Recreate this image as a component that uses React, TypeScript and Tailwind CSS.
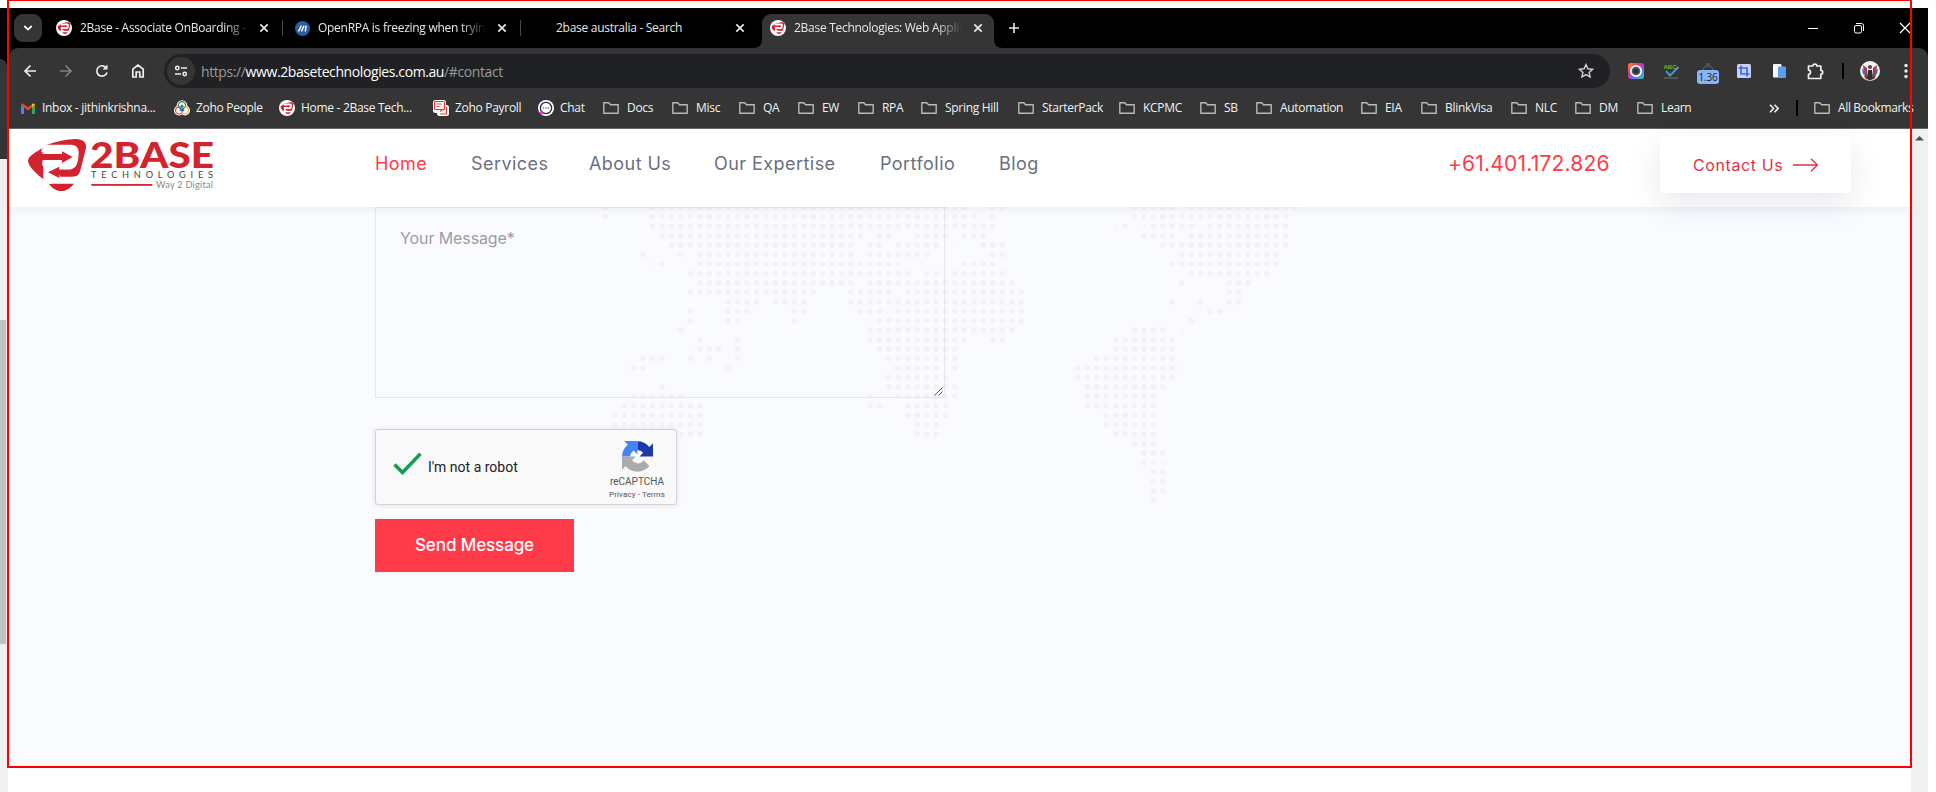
import React from "react";

const UI = "font-['Open_Sans','Noto_Sans',sans-serif]";

/* ---------- world map dots: [row, [from, to], ...] in grid cells ---------- */
const PITCH = 9.45;
const DOTS: [number, ...number[][]][] = [
  [0, [0, 0], [5, 38], [41, 42], [56, 60], [62, 73]],
  [1, [0, 0], [5, 39], [41, 41], [56, 72]],
  [2, [5, 41], [55, 55], [58, 62], [64, 72]],
  [3, [6, 27], [29, 30], [33, 36], [38, 40], [57, 60], [62, 72]],
  [4, [7, 26], [28, 29], [31, 35], [40, 42], [59, 72]],
  [5, [4, 4], [8, 8], [10, 26], [28, 34], [41, 42], [61, 71]],
  [6, [6, 6], [10, 30], [38, 41], [60, 71]],
  [7, [9, 32], [34, 35], [37, 42], [62, 70]],
  [8, [10, 26], [28, 43], [61, 61], [66, 68]],
  [9, [9, 22], [26, 30], [32, 44], [66, 67]],
  [10, [13, 16], [18, 21], [26, 44], [60, 60], [63, 63], [66, 67]],
  [11, [9, 9], [13, 15], [20, 21], [27, 29], [31, 44], [64, 65]],
  [12, [9, 9], [13, 14], [20, 20], [29, 44], [62, 62]],
  [13, [8, 8], [28, 43], [56, 59]],
  [14, [10, 10], [14, 14], [28, 38], [41, 42], [54, 60]],
  [15, [10, 12], [14, 14], [29, 37], [54, 60]],
  [16, [4, 6], [9, 9], [11, 11], [14, 14], [30, 37], [52, 60]],
  [17, [3, 4], [13, 13], [31, 35], [37, 37], [50, 60]],
  [18, [30, 36], [50, 60]],
  [19, [6, 6], [30, 37], [51, 59]],
  [20, [3, 8], [28, 28], [31, 37], [51, 58]],
  [21, [2, 10], [28, 29], [32, 36], [51, 58]],
  [22, [1, 10], [32, 36], [53, 58]],
  [23, [1, 10], [33, 35], [53, 58]],
  [24, [8, 10], [33, 35], [54, 58]],
  [25, [56, 58]],
  [26, [57, 59]],
  [27, [57, 58]],
  [28, [58, 59]],
  [29, [58, 59]],
  [30, [58, 59]],
  [31, [58, 58]],
];
const SMALL = [[37, 4], [5, 6], [31, 6], [9, 15], [54, 2], [57, 2], [63, 11], [61, 13], [61, 17], [59, 27]];

function WorldMap() {
  return (
    <svg className="absolute left-[593px] top-[0px]" width="712" height="310" fill="#f3f3f7">
      {DOTS.flatMap(([r, ...runs]) =>
        runs.flatMap(([a, b]) =>
          Array.from({ length: b - a + 1 }, (_, i) => (
            <circle key={`${r}-${a + i}`} cx={3.3 + (a + i) * PITCH} cy={0.3 + r * PITCH} r="2.8" />
          ))
        )
      )}
      {SMALL.map(([c, r]) => (
        <circle key={`s${c}-${r}`} cx={3.3 + c * PITCH} cy={0.3 + r * PITCH} r="1.3" />
      ))}
    </svg>
  );
}

/* ---------- brand ---------- */
function Emblem() {
  return (
    <g>
      <path fill="#d2232f" d="M24 87C26 66 60 56 82 38C105 29 150 20 168 21C190 22 200 32 198 48L182 112C178 128 172 134 158 134L162 155C150 170 138 177 124 177C110 177 98 170 86 155L68 140C48 124 26 104 24 87Z" />
      <path fill="#fff" d="M64 62C64 44 76 38 90 38H152C168 38 177 48 176 64C175 96 168 110 150 113H96L96 155H68V112C68 98 62 92 64 84Z" />
      <path fill="#fff" d="M66 100H120V155H60V134ZM60 134H190V155H66Z" />
      <path fill="#d2232f" d="M62 66H126V58L158 75L126 93V84H62ZM84 121L118 104V113H176L172 130H118V138Z" />
      <path fill="#d2232f" d="M60 62L68 60V86C64 94 68 100 70 106V141C52 128 40 112 40 92Z" />
    </g>
  );
}

function Favicon() {
  return (
    <svg className="size-4 shrink-0" viewBox="0 0 16 16">
      <circle cx="8" cy="8" r="8" fill="#fff" />
      <svg x="1.2" y="2" width="13.6" height="12.2" viewBox="22 18 178 162">
        <Emblem />
      </svg>
    </svg>
  );
}

function Logo() {
  return (
    <svg className="mt-[3px] shrink-0 self-start" width="190" height="62" viewBox="0 0 190 62">
      <g transform="translate(-8 0) scale(.3333)">
        <Emblem />
      </g>
      <g fontFamily="Lato, 'Open Sans', sans-serif">
        <text x="62" y="35.7" fontSize="36.5" fontWeight="900" fill="#d2232f" textLength="124" lengthAdjust="spacingAndGlyphs">2BASE</text>
        <text x="63" y="45.600" fontSize="9.200" fill="#444" textLength="122" lengthAdjust="spacing">TECHNOLOGIES</text>
        <text x="128" y="55.700" fontSize="9.200" fill="#888" textLength="57" lengthAdjust="spacing">Way 2 Digital</text>
      </g>
      <rect x="63.300" y="52" width="61" height="1.800" fill="#d2232f" />
    </svg>
  );
}

/* ---------- small browser glyphs ---------- */
function Close() {
  return (
    <svg className="size-3 shrink-0" viewBox="0 0 12 12" stroke="#e8e8e8" strokeWidth="1.7">
      <path d="M2.3 2.3l7.4 7.4M9.7 2.3L2.3 9.7" />
    </svg>
  );
}

function Folder() {
  return (
    <svg className="h-3 w-4 shrink-0" viewBox="0 0 16 12" fill="none" stroke="#b9b9b9" strokeWidth="1.4" strokeLinejoin="round">
      <path d="M.8.8h5l1.7 2h7.7v8.4H.8z" />
    </svg>
  );
}

function Title({ children, className }: { children: string; className: string }) {
  return (
    <div className={`h-5 shrink-0 overflow-hidden whitespace-nowrap text-[12px] leading-5 tracking-[-0.28px] text-[#e8e8e8] ${className}`}>
      {children}
    </div>
  );
}

const FADE = "[mask-image:linear-gradient(to_right,#000_85%,transparent)]";

function TabStrip() {
  return (
    <div className="flex h-10 items-center bg-black pl-[5px]">
      <div className="mr-[14px] flex size-7 shrink-0 items-center justify-center rounded-[9px] bg-[#353535]">
        <svg width="10" height="6" viewBox="0 0 10 6" fill="none" stroke="#fff" strokeWidth="1.8">
          <path d="M1.3 1L5 4.6 8.700 1" />
        </svg>
      </div>
      <Favicon />
      <Title className={`ml-2 w-[170px] ${FADE}`}>2Base - Associate OnBoarding -</Title>
      <div className="ml-2"><Close /></div>
      <div className="ml-[12px] h-4 w-px bg-[#4a4a4a]" />
      <svg className="ml-[12px] size-[15px] shrink-0" viewBox="0 0 15 15">
        <circle cx="7.500" cy="7.500" r="7.500" fill="#2a5ea5" />
        <path d="M3.500 10.500L6.300 4.700M6.500 10.500L9 4.700M10.300 10.500l.7-5.800" stroke="#fff" strokeWidth="1.500" fill="none" />
      </svg>
      <Title className={`ml-2 w-[168px] ${FADE}`}>OpenRPA is freezing when trying</Title>
      <div className="ml-[10px]"><Close /></div>
      <div className="ml-[12px] h-4 w-px bg-[#4a4a4a]" />
      <Title className="ml-[35px] w-[178px]">2base australia - Search</Title>
      <Close />
      <svg className="ml-[7px] size-[9px] shrink-0 self-end" viewBox="0 0 9 9" fill="#353535">
        <path d="M9 0v9H0C6 9 9 6 9 0z" />
      </svg>
      <div className="flex h-[34px] w-[232px] shrink-0 items-center self-end rounded-t-[9px] bg-[#353535] pb-[6px] pl-[8px]">
        <Favicon />
        <Title className={`ml-2 w-[168px] ${FADE}`}>2Base Technologies: Web Application</Title>
        <div className="ml-[10px]"><Close /></div>
      </div>
      <svg className="size-[9px] shrink-0 self-end" viewBox="0 0 9 9" fill="#353535">
        <path d="M0 0v9h9C3 9 0 6 0 0z" />
      </svg>
      <svg className="ml-[6px] size-[10px] shrink-0" viewBox="0 0 10 10" stroke="#e8e8e8" strokeWidth="1.600">
        <path d="M5 0v10M0 5h10" />
      </svg>
      <svg className="mr-[16px] ml-auto h-[12px] w-[105px] shrink-0" viewBox="0 0 105 12" fill="none" stroke="#fff" strokeWidth="1">
        <path d="M1 6.500h10" />
        <rect x="47.500" y="3.500" width="7" height="7.500" rx="1.500" />
        <path d="M49 1.500h5.500q2 0 2 2v5.500" />
        <path d="M93 1l10 10M103 1l-10 10" strokeWidth="1.300" />
      </svg>
    </div>
  );
}

function Toolbar() {
  return (
    <div className="bg-black">
      <div className="flex h-10 items-center rounded-t-[9px] bg-[#353535] pt-[6px]">
        <svg className="h-[16px] w-[155px] shrink-0" viewBox="0 0 155 16" fill="none" stroke="#eee" strokeWidth="1.700">
          <path d="M27 8H16.500M21.500 2.500L16 8l5.500 5.500" />
          <path d="M51 8h10.500M56.500 2.500L62 8l-5.500 5.500" stroke="#808080" />
          <path d="M97.300 5A5.200 5.200 0 1 0 98 9.500" />
          <path d="M98.500 1.500v5h-5z" fill="#eee" stroke="none" />
          <path d="M123.800 14V6.200L129 2l5.200 4.200V14h-3.400V9h-3.600v5z" />
        </svg>
        <div className="flex h-[34px] w-[1446px] shrink-0 items-center rounded-full bg-[#202124] pr-[16px] pl-[3px]">
          <div className="flex size-7 items-center justify-center rounded-full bg-[#353535]">
            <svg width="14" height="12" viewBox="0 0 14 12" fill="none" stroke="#eee" strokeWidth="1.500">
              <circle cx="3.300" cy="3" r="1.700" />
              <path d="M7 3h6M1 9h6" />
              <circle cx="10.700" cy="9" r="1.700" />
            </svg>
          </div>
          <div className="ml-[6px] text-[14px] tracking-[-0.4px] whitespace-nowrap text-[#9a9a9a]">
            https://<span className="text-white">www.2basetechnologies.com.au</span>/#contact
          </div>
          <svg className="ml-auto" width="16" height="16" viewBox="0 0 16 16" fill="none" stroke="#d0d0d0" strokeWidth="1.400">
            <path d="M8 1.600l1.900 4.200 4.600.5-3.400 3.100 1 4.500L8 11.600l-4.100 2.300 1-4.500L1.500 6.300l4.600-.5z" />
          </svg>
        </div>
        <svg className="ml-[18px] size-4 shrink-0" viewBox="0 0 16 16">
          <defs>
            <linearGradient id="ring" x1="0" y1="0" x2="1" y2="1">
              <stop offset="0" stopColor="#ff9a1f" />
              <stop offset=".35" stopColor="#f22c6c" />
              <stop offset=".6" stopColor="#7a5cff" />
              <stop offset="1" stopColor="#1fe0a0" />
            </linearGradient>
          </defs>
          <rect width="16" height="16" rx="3" fill="url(#ring)" />
          <circle cx="8" cy="8" r="5.200" fill="#4a5560" stroke="#fff" strokeWidth="1.800" />
          <circle cx="8" cy="8" r="2.500" fill="#27323c" />
        </svg>
        <svg className="ml-[19px] h-4 w-[17px] shrink-0" viewBox="0 0 17 16">
          <path d="M3 8l4 4.500L15.500 4" fill="none" stroke="#3d9ad1" strokeWidth="2" />
          <text x="0.500" y="6" fontSize="6" fontWeight="700" fontFamily="Liberation Sans, sans-serif" fill="#7ab829" textLength="13">ABC</text>
          <path d="M1 15h14" stroke="#777" />
        </svg>
        <div className="ml-[17px] flex h-[28px] w-[22px] shrink-0 flex-col items-center pt-[6px]">
          <svg className="h-[7px] w-[14px] shrink-0" viewBox="0 0 14 7" fill="none" stroke="#5c5c5c" strokeWidth="1.300">
            <path d="M5 1h4M2 7a5 4 0 0 1 10 0" />
          </svg>
          <div className="h-[14px] w-[22px] shrink-0 rounded-[3px] bg-[#8ab4f8] text-center text-[10px] leading-[15px] tracking-tight text-[#202124]">1.36</div>
        </div>
        <svg className="ml-[18px] size-[14px] shrink-0" viewBox="0 0 14 14">
          <rect width="14" height="14" rx="1.500" fill="#c6d2fb" />
          <path d="M4 1.500V10h8.500M1.500 4H10v8.500" fill="none" stroke="#4263eb" strokeWidth="1.600" />
        </svg>
        <svg className="ml-[22px] h-[14px] w-[13px] shrink-0" viewBox="0 0 13 14">
          <rect width="8.500" height="13.500" rx="1" fill="#f4f7fc" />
          <rect x="5" y="2.500" width="8" height="11.500" rx="1" fill="#5b9ff5" />
        </svg>
        <svg className="ml-[21px] h-[17px] w-[18px] shrink-0" viewBox="0 0 18 17" fill="none" stroke="#eee" strokeWidth="1.700" strokeLinejoin="round">
          <path d="M1.500 3h4.300a2 1.900 0 0 1 4 0h4v4.300a1.900 2 0 0 1 0 4V15.500H1.500v-4.200a2 2.100 0 0 0 0-4.200z" />
        </svg>
        <div className="ml-[17px] h-4 w-[2px] shrink-0 bg-black" />
        <svg className="ml-[16px] size-5 shrink-0" viewBox="0 0 20 20">
          <circle cx="10" cy="10" r="10" fill="#f3f3f3" />
          <path d="M3 4l4 3v8l-3-3zM17 4l-4 3v8l3-3z" fill="#c33149" />
          <path d="M2 8l3 1 1 6-3-2zM18 8l-3 1-.5 6 2.500-2z" fill="#3e6fb5" />
          <path d="M4 15l3-3 1 6-2 .5zM16 15l-3-3-1 6 2 .5z" fill="#8a4038" />
          <circle cx="10" cy="6" r="2" fill="#5b4038" />
          <path d="M8 9h4l1 9-3 1.500L7 18z" fill="#2b2f36" />
        </svg>
        <svg className="ml-[24px] h-4 w-1 shrink-0" viewBox="0 0 4 16" fill="#eee">
          <circle cx="2" cy="2.500" r="1.700" /><circle cx="2" cy="8" r="1.700" /><circle cx="2" cy="13.500" r="1.700" />
        </svg>
      </div>
    </div>
  );
}

/* ---------- bookmarks ---------- */
const Gmail = () => (
  <svg className="h-[11px] w-[14px] shrink-0" viewBox="0 0 14 11">
    <path fill="#4285f4" d="M0 2v8.200q0 .8.800.8H3V4z" />
    <path fill="#34a853" d="M14 2v8.200q0 .8-.8.800H11V4z" />
    <path fill="#ea4335" d="M0 2Q.2 0 2 .5L7 4.300 12 .5Q13.800 0 14 2L7 7.600z" />
    <path fill="#fbbc04" d="M11 4.500V1.200L12 .5q1.800-.3 2 1.500z" />
  </svg>
);
const People = () => (
  <svg className="size-4 shrink-0" viewBox="0 0 16 16" fill="none" strokeWidth="1.200">
    <circle cx="8" cy="5.500" r="5.300" fill="#fff" /><circle cx="5" cy="10.500" r="5" fill="#fff" /><circle cx="11" cy="10.500" r="5" fill="#fff" />
    <circle cx="8" cy="5.300" r="3.600" stroke="#1f8a4c" /><circle cx="5.200" cy="10.400" r="3.600" stroke="#e0403a" /><circle cx="10.800" cy="10.400" r="3.600" stroke="#e9b320" />
    <circle cx="8" cy="6" r="1.500" fill="#2d74c4" /><path d="M5.500 11a2.500 2.500 0 0 1 5 0z" fill="#2d74c4" />
  </svg>
);
const Payroll = () => (
  <svg className="size-4 shrink-0" viewBox="0 0 16 16">
    <rect width="13" height="13" rx="2.500" fill="#fff" />
    <rect x="4" y="5" width="12" height="11" rx="2.500" fill="#fff" />
    <rect x="1.500" y="1.500" width="10" height="8" rx="1" fill="none" stroke="#e0403a" strokeWidth="1.200" />
    <path d="M3.500 4h5M3.500 6.500h3M7 14h6.500V7M7 11.500l3-2" stroke="#e0403a" strokeWidth="1.200" fill="none" />
  </svg>
);
const Chat = () => (
  <svg className="size-4 shrink-0" viewBox="0 0 16 16">
    <circle cx="8" cy="8" r="8" fill="#fff" />
    <circle cx="8" cy="8" r="5.600" fill="none" stroke="#2a2350" strokeWidth="1.300" />
    <path d="M5 8h1.200M7.400 8h1.200M9.800 8H11" stroke="#2a2350" strokeWidth="1.200" />
    <circle cx="3.500" cy="12.500" r="1.800" fill="#f032c8" />
  </svg>
);

const BOOKMARKS: { label: string; icon: React.ReactNode; gap: string; width: string }[] = [
  { label: "Inbox - jithinkrishna...", icon: <Gmail />, gap: "gap-[7px]", width: "w-[153px]" },
  { label: "Zoho People", icon: <People />, gap: "gap-[6px]", width: "w-[105px]" },
  { label: "Home - 2Base Tech...", icon: <Favicon />, gap: "gap-[6px]", width: "w-[154px]" },
  { label: "Zoho Payroll", icon: <Payroll />, gap: "gap-[6px]", width: "w-[105px]" },
  { label: "Chat", icon: <Chat />, gap: "gap-[6px]", width: "w-[65px]" },
  { label: "Docs", icon: <Folder />, gap: "gap-2", width: "w-[69px]" },
  { label: "Misc", icon: <Folder />, gap: "gap-2", width: "w-[67px]" },
  { label: "QA", icon: <Folder />, gap: "gap-2", width: "w-[59px]" },
  { label: "EW", icon: <Folder />, gap: "gap-2", width: "w-[60px]" },
  { label: "RPA", icon: <Folder />, gap: "gap-2", width: "w-[63px]" },
  { label: "Spring Hill", icon: <Folder />, gap: "gap-2", width: "w-[97px]" },
  { label: "StarterPack", icon: <Folder />, gap: "gap-2", width: "w-[101px]" },
  { label: "KCPMC", icon: <Folder />, gap: "gap-2", width: "w-[81px]" },
  { label: "SB", icon: <Folder />, gap: "gap-2", width: "w-[56px]" },
  { label: "Automation", icon: <Folder />, gap: "gap-2", width: "w-[105px]" },
  { label: "EIA", icon: <Folder />, gap: "gap-2", width: "w-[60px]" },
  { label: "BlinkVisa", icon: <Folder />, gap: "gap-2", width: "w-[90px]" },
  { label: "NLC", icon: <Folder />, gap: "gap-2", width: "w-[64px]" },
  { label: "DM", icon: <Folder />, gap: "gap-2", width: "w-[62px]" },
  { label: "Learn", icon: <Folder />, gap: "gap-2", width: "w-[132px]" },
];

function Bookmarks() {
  return (
    <div className="flex h-[41px] items-center border-b border-[#666] bg-[#353535] pl-[12px] text-[12px] tracking-[-0.3px] whitespace-nowrap text-[#f2f2f2]">
      {BOOKMARKS.map((b) => (
        <div key={b.label} className={`flex shrink-0 items-center ${b.gap} ${b.width}`}>
          {b.icon}
          <span>{b.label}</span>
        </div>
      ))}
      <svg className="shrink-0" width="10" height="9" viewBox="0 0 10 9" fill="none" stroke="#eee" strokeWidth="1.600">
        <path d="M1 .7l3.600 3.800L1 8.300M5.500.7l3.600 3.800-3.600 3.800" />
      </svg>
      <div className="ml-[17px] h-4 w-[2px] shrink-0 bg-black" />
      <div className="ml-[16px] flex items-center gap-2 tracking-[-0.35px]">
        <Folder />
        <span>All Bookmarks</span>
      </div>
    </div>
  );
}

/* ---------- site ---------- */
const NAV = [
  { label: "Home", cls: "w-[96px] text-[#ff3b49]" },
  { label: "Services", cls: "w-[118px]" },
  { label: "About Us", cls: "w-[125px]" },
  { label: "Our Expertise", cls: "w-[166px]" },
  { label: "Portfolio", cls: "w-[119px]" },
  { label: "Blog", cls: "w-[449px]" },
];

function SiteHeader() {
  return (
    <header className="relative z-10 flex h-[78px] items-center bg-white pl-[19px] font-[Inter,sans-serif] shadow-[0_2px_8px_rgba(80,90,120,0.09)]">
      <Logo />
      <nav className="mb-[10px] ml-[157px] flex text-[18px] tracking-[0.45px] whitespace-nowrap text-[#6b6f82]">
        {NAV.map((n) => (
          <a key={n.label} className={`shrink-0 ${n.cls}`}>{n.label}</a>
        ))}
      </nav>
      <div className="mb-[8px] w-[212px] shrink-0 text-[21px] tracking-[0.2px] whitespace-nowrap text-[#ff3b49]">+61.401.172.826</div>
      <button className="mb-[7px] flex h-[57px] w-[191px] shrink-0 items-center rounded bg-white pl-[33px] text-[16px] tracking-[0.6px] text-[#dc3545] shadow-[0_10px_30px_rgba(60,80,110,0.13)]">
        <span className="w-[100px] text-left whitespace-nowrap">Contact Us</span>
        <svg width="26" height="14" viewBox="0 0 26 14" fill="none" stroke="#dc3545" strokeWidth="1.300">
          <path d="M0 7h24.500M18 .8L24.500 7 18 13.200" />
        </svg>
      </button>
    </header>
  );
}

function Recaptcha() {
  return (
    <div className="mt-[31px] flex h-[76px] w-[302px] items-center rounded-[3px] border border-[#d3d3d3] bg-[#f9f9f9] font-[Roboto,sans-serif] shadow-[0_0_4px_1px_rgba(0,0,0,0.08)]">
      <svg className="mb-[7px] ml-[17px] shrink-0" width="29" height="23" viewBox="0 0 29 23" fill="none" stroke="#0f9d58" strokeWidth="3.400">
        <path d="M1.500 12.500l8 8L27.500 1.700" />
      </svg>
      <span className="ml-[6px] text-[14px] whitespace-nowrap text-[#222]">I&#39;m not a robot</span>
      <div className="ml-auto flex w-[78px] flex-col items-center pt-[6px] text-[#555]">
        <svg width="31" height="31" viewBox="0 0 64 64">
          <path fill="#1c3aa9" d="M64 31.955V4.600l-7.560 7.560A31.960 31.960 0 0 0 31.700.300v18.300a15.200 15.200 0 0 1 12 5.900l-7.500 7.500z" />
          <path fill="#4285f4" d="M31.862.094H4.500l7.600 7.600A31.960 31.960 0 0 0 .1 32h17.100c0-5.400 2.500-9.300 6.800-12.200l7.800 7.800z" />
          <path fill="#ababab" d="M.001 32.045V59.400l7.500-7.500A31.960 31.960 0 0 0 56.700 51.500L44.800 40.500a15.300 15.300 0 0 1-24.300-.6l7.800-7.800z" />
        </svg>
        <span className="mt-[3px] text-[10px] leading-[14px]">reCAPTCHA</span>
        <span className="text-[8px] leading-[11px] tracking-[0.1px]">Privacy - Terms</span>
      </div>
    </div>
  );
}

function ContactForm() {
  return (
    <main className="relative h-[560px] bg-[#fafbff] pl-[366px] font-[Inter,sans-serif]">
      <WorldMap />
      <div className="relative flex h-[191px] w-[570px] items-start border border-[#e8e8ec] pt-[18px] pl-[24px] text-[16px] tracking-[-0.1px] text-[#9c9ca4]">
        Your Message*
        <svg className="absolute right-[1px] bottom-[1px]" width="9" height="9" viewBox="0 0 9 9" stroke="#555" strokeWidth="1">
          <path d="M.5 8.500l8-8M4.500 8.500l4-4" />
        </svg>
      </div>
      <Recaptcha />
      <button className="mt-[14px] flex h-[53px] w-[199px] items-center justify-center bg-[#ff3b49] text-[17px] font-medium tracking-[-0.1px] text-white">
        Send Message
      </button>
    </main>
  );
}

export default function App() {
  return (
    <div className={`relative flex h-[792px] w-[1936px] overflow-hidden bg-white pt-[8px] ${UI}`}>
      <div className="flex w-[9px] shrink-0 flex-col">
        <div className="h-[51px] bg-black" />
        <div className="h-[100px] bg-black">
          <div className="h-full w-[7px] rounded-tr-[8px] bg-[#353535]" />
        </div>
        <div className="w-[8px] flex-1 bg-[#f0f0f0] pt-[161px]">
          <div className="h-[324px] w-[6px] bg-[#c1c1c1]" />
        </div>
      </div>
      <div className="flex w-[1919px] shrink-0 flex-col">
        <TabStrip />
        <Toolbar />
        <Bookmarks />
        <div className="flex flex-1">
          <div className="w-[1902px] shrink-0">
            <SiteHeader />
            <ContactForm />
          </div>
          <div className="flex-1 bg-[#f0f0f0] pt-[7px] pl-[4px]">
            <svg width="9" height="5" viewBox="0 0 9 5" fill="#505050">
              <path d="M0 4.500L4.500 0 9 4.500z" />
            </svg>
          </div>
        </div>
      </div>
      <div className="pointer-events-none absolute top-0 left-[7px] z-20 h-[768px] w-[1905px] border-2 border-t border-[#f00]" />
    </div>
  );
}
